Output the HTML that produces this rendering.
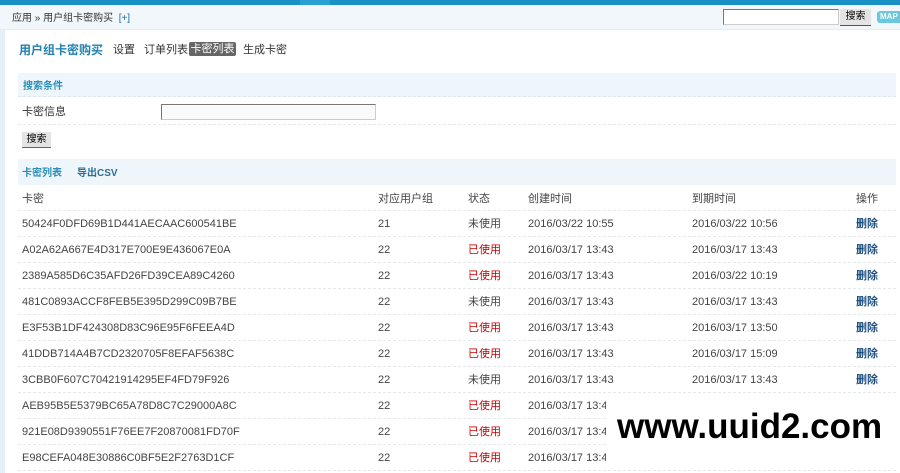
<!DOCTYPE html>
<html><head><meta charset="utf-8"><style>
*{margin:0;padding:0;box-sizing:border-box}
body{width:900px;height:473px;overflow:hidden;background:#fff;font-family:"Liberation Sans","Noto Sans CJK SC",sans-serif;font-size:11px;line-height:13px;color:#444;position:relative}
.a{position:absolute;white-space:nowrap;line-height:13px}
.row{position:absolute;left:18px;width:878px;height:26px;border-bottom:1px dashed #e3e8ec}
.row span{position:absolute;top:7px;line-height:13px;height:13px;overflow:visible}
.red{color:#c00}
.del{color:#1a4f80;font-weight:bold}
</style></head><body>
<div class="a" style="left:0;top:0;width:900px;height:5px;background:#1a91c4"></div>
<div class="a" style="left:300px;top:0;width:30px;height:6px;background:#2aa0d0"></div>
<div class="a" style="left:0;top:5px;width:900px;height:25px;background:#f1f7fa;border-bottom:1px solid #e4edf2"></div>
<div class="a" style="left:12px;top:12px;font-size:10px;color:#333">应用 » 用户组卡密购买 &nbsp;<span style="color:#1a6fa0">[+]</span></div>
<div class="a" style="left:723px;top:9px;width:116px;height:16px;border:1px solid #777;border-right-color:#ccc;border-bottom-color:#ccc;background:#fff"></div>
<div class="a" style="left:840px;top:9px;width:31px;height:17px;background:#e4e4e4;border-bottom:1px solid #555;font-size:10px;color:#000;text-align:center;line-height:16px">搜索</div>
<div class="a" style="left:877px;top:11px;width:26px;height:12px;background:#6cc6dc;border-radius:3px;color:#fff;font-size:8px;font-weight:bold;line-height:12px;padding-left:3px">MAP</div>
<div class="a" style="left:0;top:30px;width:5px;height:443px;background:#e4eff7"></div>
<div class="a" style="left:19px;top:43px;font-size:12px;font-weight:bold;color:#2181b0;line-height:15px">用户组卡密购买</div>
<div class="a" style="left:113px;top:44px;color:#333">设置</div>
<div class="a" style="left:144px;top:44px;color:#333">订单列表</div>
<div class="a" style="left:189px;top:42px;width:47px;height:14px;background:#666;border-radius:2px;color:#fff;text-align:center;line-height:14px">卡密列表</div>
<div class="a" style="left:243px;top:44px;color:#333">生成卡密</div>
<div class="a" style="left:18px;top:73px;width:878px;height:24px;background:#eef5fb;border-bottom:1px dashed #dde6ee"></div>
<div class="a" style="left:23px;top:80px;font-size:10px;font-weight:bold;color:#2a8fb8">搜索条件</div>
<div class="a" style="left:18px;top:97px;width:878px;height:28px;border-bottom:1px dashed #e3e8ec"></div>
<div class="a" style="left:22px;top:106px;color:#333">卡密信息</div>
<div class="a" style="left:161px;top:104px;width:215px;height:16px;border:1px solid #777;border-right-color:#ccc;border-bottom-color:#ccc;background:#fafafa"></div>
<div class="a" style="left:22px;top:132px;width:29px;height:16px;background:#e4e4e4;border-bottom:1px solid #666;text-align:center;line-height:15px;font-size:10px;color:#000">搜索</div>
<div class="a" style="left:18px;top:159px;width:878px;height:26px;background:#eef5fb"></div>
<div class="a" style="left:22px;top:167px;font-size:10px;font-weight:bold;color:#2a8fb8">卡密列表</div>
<div class="a" style="left:77px;top:167px;font-size:10px;font-weight:bold;color:#2a6f95">导出CSV</div>
<div class="row" style="top:186px;height:25px"><span style="left:4px">卡密</span><span style="left:360px">对应用户组</span><span style="left:450px">状态</span><span style="left:510px">创建时间</span><span style="left:674px">到期时间</span><span style="left:838px">操作</span></div>
<div class="row" style="top:211px"><span style="left:4px">50424F0DFD69B1D441AECAAC600541BE</span><span style="left:360px">21</span><span style="left:450px">未使用</span><span style="left:510px">2016/03/22 10:55</span><span style="left:674px">2016/03/22 10:56</span><span class="del" style="left:838px">删除</span></div>
<div class="row" style="top:237px"><span style="left:4px">A02A62A667E4D317E700E9E436067E0A</span><span style="left:360px">22</span><span class="red" style="left:450px">已使用</span><span style="left:510px">2016/03/17 13:43</span><span style="left:674px">2016/03/17 13:43</span><span class="del" style="left:838px">删除</span></div>
<div class="row" style="top:263px"><span style="left:4px">2389A585D6C35AFD26FD39CEA89C4260</span><span style="left:360px">22</span><span class="red" style="left:450px">已使用</span><span style="left:510px">2016/03/17 13:43</span><span style="left:674px">2016/03/22 10:19</span><span class="del" style="left:838px">删除</span></div>
<div class="row" style="top:289px"><span style="left:4px">481C0893ACCF8FEB5E395D299C09B7BE</span><span style="left:360px">22</span><span style="left:450px">未使用</span><span style="left:510px">2016/03/17 13:43</span><span style="left:674px">2016/03/17 13:43</span><span class="del" style="left:838px">删除</span></div>
<div class="row" style="top:315px"><span style="left:4px">E3F53B1DF424308D83C96E95F6FEEA4D</span><span style="left:360px">22</span><span class="red" style="left:450px">已使用</span><span style="left:510px">2016/03/17 13:43</span><span style="left:674px">2016/03/17 13:50</span><span class="del" style="left:838px">删除</span></div>
<div class="row" style="top:341px"><span style="left:4px">41DDB714A4B7CD2320705F8EFAF5638C</span><span style="left:360px">22</span><span class="red" style="left:450px">已使用</span><span style="left:510px">2016/03/17 13:43</span><span style="left:674px">2016/03/17 15:09</span><span class="del" style="left:838px">删除</span></div>
<div class="row" style="top:367px"><span style="left:4px">3CBB0F607C70421914295EF4FD79F926</span><span style="left:360px">22</span><span style="left:450px">未使用</span><span style="left:510px">2016/03/17 13:43</span><span style="left:674px">2016/03/17 13:43</span><span class="del" style="left:838px">删除</span></div>
<div class="row" style="top:393px"><span style="left:4px">AEB95B5E5379BC65A78D8C7C29000A8C</span><span style="left:360px">22</span><span class="red" style="left:450px">已使用</span><span style="left:510px">2016/03/17 13:4</span></div>
<div class="row" style="top:419px"><span style="left:4px">921E08D9390551F76EE7F20870081FD70F</span><span style="left:360px">22</span><span class="red" style="left:450px">已使用</span><span style="left:510px">2016/03/17 13:4</span></div>
<div class="row" style="top:445px"><span style="left:4px">E98CEFA048E30886C0BF5E2F2763D1CF</span><span style="left:360px">22</span><span class="red" style="left:450px">已使用</span><span style="left:510px">2016/03/17 13:4</span></div>
<div class="a" style="left:606px;top:396px;width:290px;height:68px;background:#fff"></div>
<div class="a" style="left:617px;top:407px;font-family:'Liberation Sans',sans-serif;font-weight:bold;font-size:35px;line-height:40px;color:#000">www.uuid2.com</div>
</body></html>
